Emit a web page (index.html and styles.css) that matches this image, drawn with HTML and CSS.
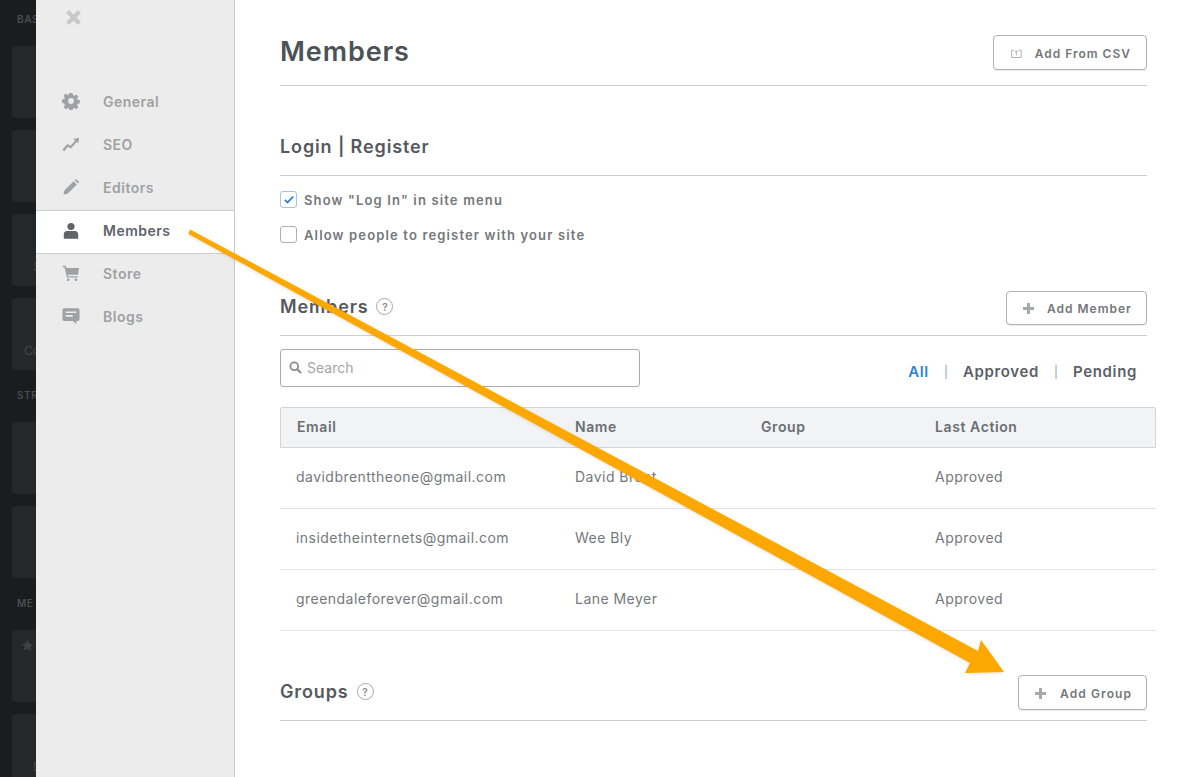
FILE: index.html
```html
<!DOCTYPE html>
<html lang="en">
<head>
<meta charset="utf-8">
<title>Members</title>
<link rel="stylesheet" href="styles.css">
</head>
<body>
<div class="page">
  <aside class="rail">
    <div class="rail-label">BAS</div>
    <div class="rail-card"></div>
    <div class="rail-card"></div>
    <div class="rail-card rail-card-s"><span>S</span></div>
    <div class="rail-card rail-card-c"><span>Co</span></div>
    <div class="rail-label rail-label-next">STR</div>
    <div class="rail-card"></div>
    <div class="rail-card"></div>
    <div class="rail-label rail-label-next">ME</div>
    <div class="rail-card rail-card-star">
      <svg class="rail-star" viewBox="0 0 24 24"><path d="M12 1l3.400 7.300 7.600 1-5.600 5.400 1.500 7.800L12 18l-6.900 3.500 1.500-7.800L1 9.300l7.600-1z"/></svg>
      <span>(</span>
    </div>
    <div class="rail-card rail-card-s"><span>D</span></div>
  </aside>

  <nav class="panel">
    <svg class="close" viewBox="0 0 16 16"><path d="M1 3.800 3.800 1 8 5.200 12.200 1 15 3.800 10.800 8 15 12.200 12.200 15 8 10.800 3.800 15 1 12.200 5.200 8z"/></svg>
    <ul class="nav">
      <li class="nav-item">
        <svg class="nav-icon" viewBox="0 0 20 20"><path fill-rule="evenodd" d="M8.300 1h3.400l.5 2.500 1.500.6 2.100-1.400 2.400 2.400-1.400 2.100.6 1.500 2.500.5v3.400l-2.500.5-.6 1.500 1.400 2.100-2.400 2.400-2.100-1.400-1.500.6-.5 2.500H8.300l-.5-2.500-1.500-.6-2.100 1.400-2.400-2.400 1.400-2.100-.6-1.500L0 11.700V8.300l2.500-.5.6-1.500-1.400-2.100 2.400-2.400 2.100 1.400 1.500-.6zM10 6.800a3.200 3.200 0 1 0 0 6.400 3.200 3.200 0 0 0 0-6.400z"/></svg>
        <span>General</span>
      </li>
      <li class="nav-item">
        <svg class="nav-icon" viewBox="0 0 20 20"><path d="M1 15.500l5-5.500 3.500 2L14.500 6.300l-2-1.800 6.500-1.500-1 6.500-1.700-1.600-6.400 7.200L6.500 13 2.500 18 1 17z"/></svg>
        <span>SEO</span>
      </li>
      <li class="nav-item">
        <svg class="nav-icon" viewBox="0 0 20 20"><path d="M1.500 18.500l1.300-5L12.800 3.500l3.700 3.700-10 10zM14 2.300l1.500-1.300 3.500 3.500-1.300 1.500z"/></svg>
        <span>Editors</span>
      </li>
      <li class="nav-item nav-item-active">
        <svg class="nav-icon" viewBox="0 0 20 20"><circle cx="10" cy="5" r="4"/><path d="M2 18.500v-5c0-2 1.500-3.500 3.500-3.500h9c2 0 3.500 1.500 3.500 3.500v5z"/></svg>
        <span>Members</span>
      </li>
      <li class="nav-item">
        <svg class="nav-icon" viewBox="0 0 20 20"><path d="M1 2h3l.8 2.500H19l-1.200 7.500H6.500l.4 1.500h10.600v1.500H5.500L2.800 3.500H1z"/><circle cx="7" cy="17.500" r="1.500"/><circle cx="15.500" cy="17.500" r="1.500"/></svg>
        <span>Store</span>
      </li>
      <li class="nav-item">
        <svg class="nav-icon" viewBox="0 0 20 20"><path fill-rule="evenodd" d="M2.500 1.500h15A2 2 0 0 1 19.500 3.500v10a2 2 0 0 1-2 2H16v3.500l-4-3.500H2.500a2 2 0 0 1-2-2v-10a2 2 0 0 1 2-2zM4 5v1.800h12V5zM4 9v1.800h8V9z"/></svg>
        <span>Blogs</span>
      </li>
    </ul>
  </nav>

  <main class="main">
    <header class="section-head head-top">
      <h1 class="title">Members</h1>
      <button class="btn btn-csv" type="button">
        <svg class="btn-icon-csv" viewBox="0 0 12 10"><path d="M.5 1.500h3M8.500 1.500h3M.5 1.500v8h11v-8M6 7V2M4.300 3.500 6 1.800l1.700 1.700" fill="none" stroke="currentColor"/></svg>
        Add From CSV
      </button>
    </header>

    <header class="section-head head-login">
      <h2 class="heading heading-login">Login | Register</h2>
    </header>
    <label class="check-row check-first">
      <span class="check check-on">
        <svg viewBox="0 0 12 10"><path d="M1 5.500 4.200 8.500 11 1.500" fill="none" stroke="#2b86d4" stroke-width="2.200"/></svg>
      </span>
      Show "Log In" in site menu
    </label>
    <label class="check-row">
      <span class="check"></span>
      Allow people to register with your site
    </label>

    <header class="section-head head-members">
      <h2 class="heading heading-up">Members <span class="help">?</span></h2>
      <button class="btn btn-member" type="button"><svg class="plus" viewBox="0 0 11 11"><path d="M4 0h3v4h4v3H7v4H4V7H0V4h4z"/></svg>Add Member</button>
    </header>

    <div class="tools">
      <div class="search">
        <svg class="search-icon" viewBox="0 0 14 14"><circle cx="5.700" cy="5.700" r="4.200" fill="none" stroke="currentColor" stroke-width="2"/><path d="M8.800 8.800 13 13" stroke="currentColor" stroke-width="2.400"/></svg>
        <span>Search</span>
      </div>
      <div class="filters">
        <a class="filter filter-on">All</a>
        <span class="sep">|</span>
        <a class="filter">Approved</a>
        <span class="sep">|</span>
        <a class="filter">Pending</a>
      </div>
    </div>

    <div class="table">
      <div class="row row-head">
        <div>Email</div><div>Name</div><div>Group</div><div>Last Action</div>
      </div>
      <div class="row">
        <div>davidbrenttheone@gmail.com</div><div>David Brent</div><div></div><div>Approved</div>
      </div>
      <div class="row">
        <div>insidetheinternets@gmail.com</div><div>Wee Bly</div><div></div><div>Approved</div>
      </div>
      <div class="row">
        <div>greendaleforever@gmail.com</div><div>Lane Meyer</div><div></div><div>Approved</div>
      </div>
    </div>

    <header class="section-head head-groups">
      <h2 class="heading heading-groups">Groups <span class="help">?</span></h2>
      <button class="btn btn-group" type="button"><svg class="plus" viewBox="0 0 11 11"><path d="M4 0h3v4h4v3H7v4H4V7H0V4h4z"/></svg>Add Group</button>
    </header>
  </main>

  <svg class="arrow" viewBox="0 0 1192 777">
    <defs>
      <filter id="arrow-shadow" x="-5%" y="-5%" width="110%" height="110%">
        <feDropShadow dx="0" dy="1" stdDeviation="1.500" flood-color="#8a6a20" flood-opacity=".22"/>
      </filter>
    </defs>
    <path filter="url(#arrow-shadow)" d="M190 229.500 978 651 981 640 1004 672 965 673 970 663 188.500 234z" fill="#fda802"/>
  </svg>
</div>
</body>
</html>
```
FILE: styles.css
```css
* { box-sizing: border-box; }
html, body { margin: 0; padding: 0; background: #fff; }
body { font-family: "Inter", "Open Sans", sans-serif; }
.page { position: relative; display: flex; width: 1192px; height: 777px; overflow: hidden; }

.rail { flex: 0 0 36px; width: 36px; height: 777px; overflow: hidden; background: #1a1d1f; padding: 13px 0 0 12px; display: flex; flex-direction: column; }
.rail-label { flex: none; height: 12px; line-height: 12px; margin-left: 5px; font-size: 10px; font-weight: 600; letter-spacing: .6px; color: #4a4d50; white-space: nowrap; }
.rail-label-next { margin-top: 19px; }
.rail-card { position: relative; flex: none; width: 60px; height: 72px; margin-top: 12px; background: #25282b; border-radius: 4px; color: #45484b; font-size: 12px; white-space: nowrap; }
.rail-label + .rail-card { margin-top: 21px; }
.rail-label-next + .rail-card { margin-top: 21px; }
.rail-card span { position: absolute; }
.rail-card-s span { left: 21px; top: 45px; }
.rail-card-c span { left: 12px; top: 45px; }
.rail-card-star span { left: 23px; top: 45px; }
.rail-star { position: absolute; left: 9px; top: 9px; width: 13px; height: 13px; fill: #3e4144; }

.panel { flex: 0 0 199px; width: 199px; height: 777px; background: #ececec; border-right: 1px solid #c9c9c9; position: relative; padding-top: 81px; }
.close { position: absolute; left: 29px; top: 9px; width: 17px; height: 17px; fill: #c9c9c9; }
.nav { list-style: none; margin: 0; padding: 0; }
.nav-item { height: 43px; display: flex; align-items: center; padding-left: 26px; padding-bottom: 3px; font-size: 14px; font-weight: 600; letter-spacing: .5px; color: #a0a1a3; }
.nav-item span { margin-left: 23px; }
.nav-icon { width: 18px; height: 18px; fill: #a0a1a3; flex: none; }
.nav-item-active { height: 44px; margin-bottom: -1px; background: #fff; color: #60646a; border-top: 1px solid #cfcfcf; border-bottom: 1px solid #cfcfcf; position: relative; }
.nav-item-active .nav-icon { fill: #60646a; }

.main { flex: 1; min-width: 0; padding-left: 45px; padding-right: 45px; }
.section-head { display: flex; justify-content: space-between; align-items: center; border-bottom: 1px solid #cfcfcf; }
.head-top { height: 86px; padding-top: 35px; padding-bottom: 15px; }
.head-login { height: 90px; padding-top: 51px; padding-bottom: 20px; }
.head-members { height: 84px; padding-top: 39px; padding-bottom: 10px; }
.head-groups { height: 90px; padding-top: 44px; padding-bottom: 10px; }

.title { margin: -2px 0 0; font-size: 27px; font-weight: 600; letter-spacing: .9px; color: #4d5257; line-height: 34px; }
.heading { margin: 0; font-size: 18px; font-weight: 600; letter-spacing: .87px; color: #55595e; line-height: 24px; display: flex; align-items: center; }
.heading-login { margin-top: 2px; }
.heading-up { margin-bottom: 3px; }
.heading-groups { margin-bottom: 2px; }
.help { display: inline-flex; align-items: center; justify-content: center; width: 17px; height: 17px; margin-left: 8px; border: 1px solid #a5a7a9; border-radius: 50%; font-size: 10px; font-weight: 600; letter-spacing: 0; color: #85888b; }

.btn { display: flex; align-items: center; background: #fff; border: 1px solid #b0b2b4; border-radius: 4px; font-family: inherit; font-size: 12px; font-weight: 600; letter-spacing: 1px; color: #74777b; padding: 0 15px 0 0; box-shadow: 0 1px 1px rgba(0,0,0,.08); white-space: nowrap; }
.btn-csv { width: 154px; height: 35px; padding-left: 17px; padding-top: 2px; }
.btn-icon-csv { width: 11px; height: 9px; margin-right: 13px; color: #a8a9ab; }
.btn-member { width: 141px; height: 34px; padding-left: 16px; }
.btn-group { width: 129px; height: 35px; padding-left: 16px; padding-top: 2px; letter-spacing: 1.1px; }
.btn-group .plus { margin-right: 14px; }
.plus { flex: none; width: 11px; height: 11px; margin-right: 13px; fill: #a8a9ab; }

.check-row { display: flex; align-items: center; height: 35px; font-size: 13px; font-weight: 600; letter-spacing: 1.15px; color: #74777b; }
.check-first { margin-top: 6px; }
.check { flex: none; display: flex; align-items: center; justify-content: center; width: 17px; height: 17px; margin-right: 7px; border: 1px solid #aeb0b2; border-radius: 3px; background: #fff; }
.check svg { width: 10px; height: 9px; }
.check-on { border-color: #a9c3dc; }

.tools { display: flex; justify-content: space-between; align-items: center; margin-top: 13px; height: 38px; }
.search { display: flex; align-items: center; width: 360px; height: 38px; padding-left: 8px; padding-bottom: 2px; border: 1px solid #a9abad; border-radius: 3px; font-size: 14px; letter-spacing: 0; color: #a3a5a7; }
.search-icon { width: 13px; height: 13px; margin-right: 5px; color: #8b8d90; }
.filters { display: flex; align-items: center; padding-right: 10px; margin-top: 6px; font-size: 15px; font-weight: 600; letter-spacing: .65px; color: #5c6065; }
.filter-on { color: #2b86d4; }
.sep { margin: 0 15px; font-size: 12px; font-weight: 400; letter-spacing: 0; color: #9a9c9f; }

.table { margin: 20px -9px 0 0; }
.row { display: grid; grid-template-columns: 279px 186px 174px 1fr; align-items: center; height: 61px; padding-left: 16px; padding-bottom: 3px; border-bottom: 1px solid #e3e3e3; font-size: 14px; font-weight: 400; letter-spacing: .47px; color: #75787c; }
.row-head { grid-template-columns: 278px 186px 174px 1fr; height: 41px; padding-bottom: 2px; background: #f2f3f5; border: 1px solid #d4d5d7; border-radius: 2px 2px 0 0; font-weight: 600; letter-spacing: .6px; color: #6b6f74; }

.arrow { position: absolute; left: 0; top: 0; width: 1192px; height: 777px; pointer-events: none; }
```
